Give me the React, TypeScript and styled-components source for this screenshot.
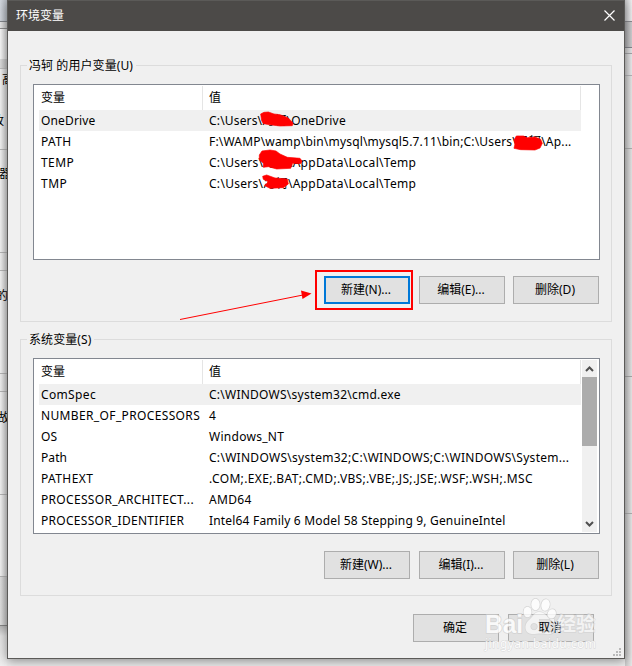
import React from 'react';
import styled, { createGlobalStyle, css } from 'styled-components';

const Global = createGlobalStyle`
  * { box-sizing: border-box; }
  body { margin: 0; background: #efefef; overflow: hidden; }
  body, button { font: 12px/16px "Noto Sans", "Noto Sans CJK SC", sans-serif; color: #000; }
`;

const Desktop = styled.div`
  display: grid;
  grid-template-columns: 7px 618px 7px;
  width: 632px;
  height: 666px;
  overflow: hidden;
  background: #ededed;
`;

const Strip = styled.div`
  display: flex;
  flex-direction: column;
  height: 666px;
  overflow: hidden;
`;

const Slice = styled.div<{ $h: number; $bg: string; $line?: string }>`
  display: flex;
  flex: 0 0 ${p => p.$h}px;
  overflow: hidden;
  background: ${p => p.$bg};
  border-bottom: ${p => (p.$line ? `1px solid ${p.$line}` : '0')};
`;

const Peek = styled.span<{ $top: number; $shift: number }>`
  margin: ${p => p.$top}px 0 0 ${p => p.$shift}px;
  white-space: nowrap;
`;

const Dialog = styled.main`
  position: relative;
  display: flex;
  flex-direction: column;
  width: 618px;
  height: 659px;
  border: 1px solid #5b5a58;
  background: #f0f0f0;
  box-shadow: 0 2px 10px rgba(0, 0, 0, 0.42);
`;

const TitleBar = styled.header`
  display: flex;
  justify-content: space-between;
  align-items: center;
  height: 30px;
  padding: 0 9px 0 8px;
  background: #4c4a48;
  color: #fff;
`;

const CloseIcon = styled.svg`
  width: 11px;
  height: 11px;
  margin-top: -2px;
`;

const Content = styled.div`
  display: flex;
  flex-direction: column;
  gap: 17px;
  padding: 34px 12px 0;
`;

const Group = styled.section`
  position: relative;
  display: flex;
  flex-direction: column;
  height: 257px;
  border: 1px solid #dcdcdc;
  padding: 18px 12px 0 12px;
`;

const Legend = styled.h2`
  position: absolute;
  top: -9px;
  left: 6px;
  margin: 0;
  padding: 0 3px 0 2px;
  background: #f0f0f0;
  font-size: 12px;
  line-height: 18px;
  font-weight: 400;
  letter-spacing: 0.08px;
  white-space: nowrap;
`;

const ListBox = styled.div`
  display: flex;
  justify-content: space-between;
  height: 176px;
  width: 567px;
  border: 1px solid #828790;
  padding: 1px 2px 1px 5px;
  background: #fff;
`;

const Table = styled.div`
  width: 542px;
`;

const Row = styled.div<{ $head?: boolean; $selected?: boolean }>`
  display: grid;
  grid-template-columns: 164px 378px;
  align-items: center;
  height: ${p => (p.$head ? 24 : 21)}px;
  background: ${p => (p.$selected ? '#f0f0f0' : '#fff')};
  ${p => p.$head && css`
    & > * { height: 24px; line-height: 23px; border-right: 1px solid #e5e5e5; }
  `}
`;

const Cell = styled.div<{ $value?: boolean }>`
  padding-left: ${p => (p.$value ? 6 : 2)}px;
  white-space: nowrap;
`;

const Label = styled.span<{ $track?: number }>`
  letter-spacing: ${p => p.$track ?? 0}px;
`;

const ScrollBar = styled.div`
  display: flex;
  flex-direction: column;
  width: 15px;
  height: 172px;
  background: #f0f0f0;
`;

const Thumb = styled.div`
  width: 15px;
  height: 69px;
  margin-bottom: auto;
  background: #acacac;
`;

const Arrow = styled.svg`
  display: block;
  width: 15px;
  height: 17px;
`;

const Buttons = styled.div<{ $gap: number }>`
  display: flex;
  justify-content: flex-end;
  gap: 8px;
  margin-top: ${p => p.$gap}px;
  & > :first-child { margin-right: 1px; }
`;

const Button = styled.button<{ $focused?: boolean }>`
  width: 86px;
  height: 28px;
  padding: 0 2px 1px 0;
  border: ${p => (p.$focused ? '2px solid #0078d7' : '1px solid #adadad')};
  background: #e1e1e1;
  white-space: nowrap;
`;

const Footer = styled.footer`
  display: flex;
  justify-content: flex-end;
  gap: 9px;
  padding: 18px 30px 0 0;
`;

const Overlay = styled.svg`
  position: absolute;
  left: 0;
  top: 0;
  width: 632px;
  height: 666px;
  pointer-events: none;
`;

type Entry = { name: string; value: string; nt?: number; vt?: number };

const userVars: Entry[] = [
  { name: 'OneDrive', value: 'C:\\Users\\冯轲\\OneDrive', nt: 0.15, vt: 0.17 },
  { name: 'PATH', value: 'F:\\WAMP\\wamp\\bin\\mysql\\mysql5.7.11\\bin;C:\\Users\\冯轲\\Ap...', nt: 0.4, vt: 0.18 },
  { name: 'TEMP', value: 'C:\\Users\\冯轲\\AppData\\Local\\Temp', nt: 0.4, vt: 0.29 },
  { name: 'TMP', value: 'C:\\Users\\冯轲\\AppData\\Local\\Temp', nt: 0.5, vt: 0.29 },
];

const systemVars: Entry[] = [
  { name: 'ComSpec', value: 'C:\\WINDOWS\\system32\\cmd.exe', nt: 0.35, vt: 0.25 },
  { name: 'NUMBER_OF_PROCESSORS', value: '4', nt: 0.36 },
  { name: 'OS', value: 'Windows_NT', nt: 0.2, vt: 0.28 },
  { name: 'Path', value: 'C:\\WINDOWS\\system32;C:\\WINDOWS;C:\\WINDOWS\\System...', nt: 0.1, vt: 0.29 },
  { name: 'PATHEXT', value: '.COM;.EXE;.BAT;.CMD;.VBS;.VBE;.JS;.JSE;.WSF;.WSH;.MSC', nt: 0.4, vt: 0.35 },
  { name: 'PROCESSOR_ARCHITECT...', value: 'AMD64', nt: 0.32, vt: 0.35 },
  { name: 'PROCESSOR_IDENTIFIER', value: 'Intel64 Family 6 Model 58 Stepping 9, GenuineIntel', nt: 0.29, vt: 0.18 },
];

function Variables({ rows, scroll }: { rows: Entry[]; scroll?: boolean }) {
  return (
    <ListBox>
      <Table>
        <Row $head>
          <Cell>变量</Cell>
          <Cell $value>值</Cell>
        </Row>
        {rows.map((r, i) => (
          <Row key={r.name} $selected={i === 0}>
            <Cell><Label $track={r.nt}>{r.name}</Label></Cell>
            <Cell $value><Label $track={r.vt}>{r.value}</Label></Cell>
          </Row>
        ))}
      </Table>
      {scroll && (
        <ScrollBar>
          <Arrow viewBox="0 0 15 17"><path d="M4 11 7.5 7.5 11 11" fill="none" stroke="#505050" strokeWidth="2" /></Arrow>
          <Thumb />
          <Arrow viewBox="0 0 15 17"><path d="M4 7 7.5 10.5 11 7" fill="none" stroke="#505050" strokeWidth="2" /></Arrow>
        </ScrollBar>
      )}
    </ListBox>
  );
}

export default function App() {
  return (
    <>
      <Global />
      <Desktop>
        <Strip>
          <Slice $h={22} $bg="linear-gradient(90deg,#d3d8df,#b5bac1)" $line="#82858a" />
          <Slice $h={7} $bg="linear-gradient(90deg,#e8e8e8,#c4c4c4)" $line="#8b8b8b" />
          <Slice $h={30} $bg="linear-gradient(90deg,#fafafa,#d4d4d4)" />
          <Slice $h={10} $bg="linear-gradient(90deg,#dedede,#bdbdbd)" $line="#bdbdbd" />
          <Slice $h={43} $bg="linear-gradient(90deg,#f5f5f5,#d0d0d0)"><Peek $top={3} $shift={2}>高</Peek></Slice>
          <Slice $h={38} $bg="linear-gradient(90deg,#f5f5f5,#d0d0d0)" $line="#b5b5b5"><Peek $top={1} $shift={-8}>改</Peek></Slice>
          <Slice $h={103} $bg="linear-gradient(90deg,#f5f5f5,#d0d0d0)" $line="#b5b5b5"><Peek $top={16} $shift={-1}>器</Peek></Slice>
          <Slice $h={18} $bg="linear-gradient(90deg,#f2f2f2,#cecece)" $line="#b5b5b5" />
          <Slice $h={103} $bg="linear-gradient(90deg,#f5f5f5,#d0d0d0)" $line="#b5b5b5"><Peek $top={17} $shift={-4}>的</Peek></Slice>
          <Slice $h={18} $bg="linear-gradient(90deg,#f2f2f2,#cecece)" $line="#b5b5b5" />
          <Slice $h={103} $bg="linear-gradient(90deg,#f5f5f5,#d0d0d0)" $line="#b5b5b5"><Peek $top={18} $shift={-2}>故</Peek></Slice>
          <Slice $h={82} $bg="linear-gradient(90deg,#f5f5f5,#d0d0d0)" $line="#b5b5b5" />
          <Slice $h={49} $bg="linear-gradient(90deg,#e2e2e2,#c2c2c2)" $line="#858585" />
          <Slice $h={40} $bg="linear-gradient(#b8b8b8,#e4e4e4 10px,#f0f0f0)" />
        </Strip>
        <Dialog>
          <TitleBar>
            <span>环境变量</span>
            <CloseIcon viewBox="0 0 11 11"><path d="M.5.5l10 10M10.5.5l-10 10" stroke="#fff" strokeWidth="1.2" /></CloseIcon>
          </TitleBar>
          <Content>
            <Group>
              <Legend>冯轲 的用户变量(U)</Legend>
              <Variables rows={userVars} />
              <Buttons $gap={16}>
                <Button $focused>新建(N)...</Button>
                <Button>编辑(E)...</Button>
                <Button>删除(D)</Button>
              </Buttons>
            </Group>
            <Group>
              <Legend>系统变量(S)</Legend>
              <Variables rows={systemVars} scroll />
              <Buttons $gap={17}>
                <Button>新建(W)...</Button>
                <Button>编辑(I)...</Button>
                <Button>删除(L)</Button>
              </Buttons>
            </Group>
          </Content>
          <Footer>
            <Button>确定</Button>
            <Button>取消</Button>
          </Footer>
        </Dialog>
        <Strip>
          <Slice $h={22} $bg="linear-gradient(90deg,#c9c9cb,#efeff0)" $line="#8b8b90" />
          <Slice $h={26} $bg="linear-gradient(90deg,#aaaaac,#cfcfd1)" $line="#85858c" />
          <Slice $h={6} $bg="linear-gradient(90deg,#cccccc,#e6e6e8)" $line="#a5a5a8" />
          <Slice $h={22} $bg="linear-gradient(90deg,#cccccc,#ececee)" $line="#b5b5b8" />
          <Slice $h={73} $bg="linear-gradient(90deg,#cacaca,#e8e8e8)" $line="#b0b0b0" />
          <Slice $h={228} $bg="linear-gradient(90deg,#c8c8c8,#e6e6e6)" $line="#a8a8a8" />
          <Slice $h={137} $bg="linear-gradient(90deg,#c8c8c8,#e8e8e8)" $line="#b0b0b0" />
          <Slice $h={152} $bg="linear-gradient(90deg,#c8c8c8,#e8e8e8)" />
        </Strip>
      </Desktop>
      <Overlay viewBox="0 0 632 666">
        <g fill="#f00" stroke="#f00" strokeWidth="2" strokeLinejoin="round">
          <g transform="translate(200 80) scale(.3333)">
            <path d="M182 102 192 97 205 96 222 102 240 104 265 114 279 129 277 137 240 138 215 135 190 131 185 122z" />
            <path d="M178 225 186 213 210 210 228 213 240 222 262 232 300 235 306 243 302 251 278 250 272 265 230 267 205 260 190 262 190 250 178 240z" />
            <path d="M188 289 200 285 225 294 262 297 265 312 250 323 210 325 194 317 205 305 190 298z" />
          </g>
          <path transform="translate(420 80) scale(.3333)" d="M282 180 289 168 310 168 322 173 345 171 362 178 367 190 360 204 345 210 302 209 282 205 285 192z" />
        </g>
        <rect x="316" y="271" width="96" height="38" fill="none" stroke="#f00" strokeWidth="2" />
        <path d="M180 319.5 303 295" stroke="#f00" fill="none" />
        <path d="M311.5 293.5 301 290.5 302.5 299z" fill="#f00" />
        <path fill="#b9b9b9" d="M619 648h2v2h-2zM616 651h2v2h-2zM619 651h2v2h-2zM613 654h2v2h-2zM616 654h2v2h-2zM619 654h2v2h-2z" />
        <g fill="#fff" stroke="#cfcfcf" strokeWidth="1.4" paintOrder="stroke">
          <g opacity="0.82">
            <ellipse cx="527.5" cy="612" rx="4" ry="5.3" />
            <ellipse cx="535.5" cy="604.5" rx="4.2" ry="5.8" />
            <ellipse cx="545.5" cy="605" rx="4.2" ry="5.8" transform="rotate(12 545.5 605)" />
            <ellipse cx="551.7" cy="614" rx="4" ry="5" transform="rotate(25 551.7 614)" />
            <text x="485" y="633" fontFamily="Liberation Sans" fontWeight="700" fontSize="25" textLength="38" lengthAdjust="spacingAndGlyphs">Bai</text>
            <text x="485" y="648" fontFamily="Noto Sans" fontSize="12" strokeWidth="0.8" textLength="111">jingyan.baidu.com</text>
          </g>
          <g opacity="0.6">
            <path fillRule="evenodd" d="M539 612c-5 0-6 5-10 8-6 5-4 14 3 14 5 0 9-1 14 0 9 2 12-8 6-13-5-4-7-9-13-9zm-5 11a3.6 3.6 0 1 0 .1 0zm5-4h15v13h-15z" />
            <text x="557" y="631" fontFamily="Noto Sans CJK SC" fontWeight="700" fontSize="19" textLength="38">经验</text>
          </g>
        </g>
      </Overlay>
    </>
  );
}
